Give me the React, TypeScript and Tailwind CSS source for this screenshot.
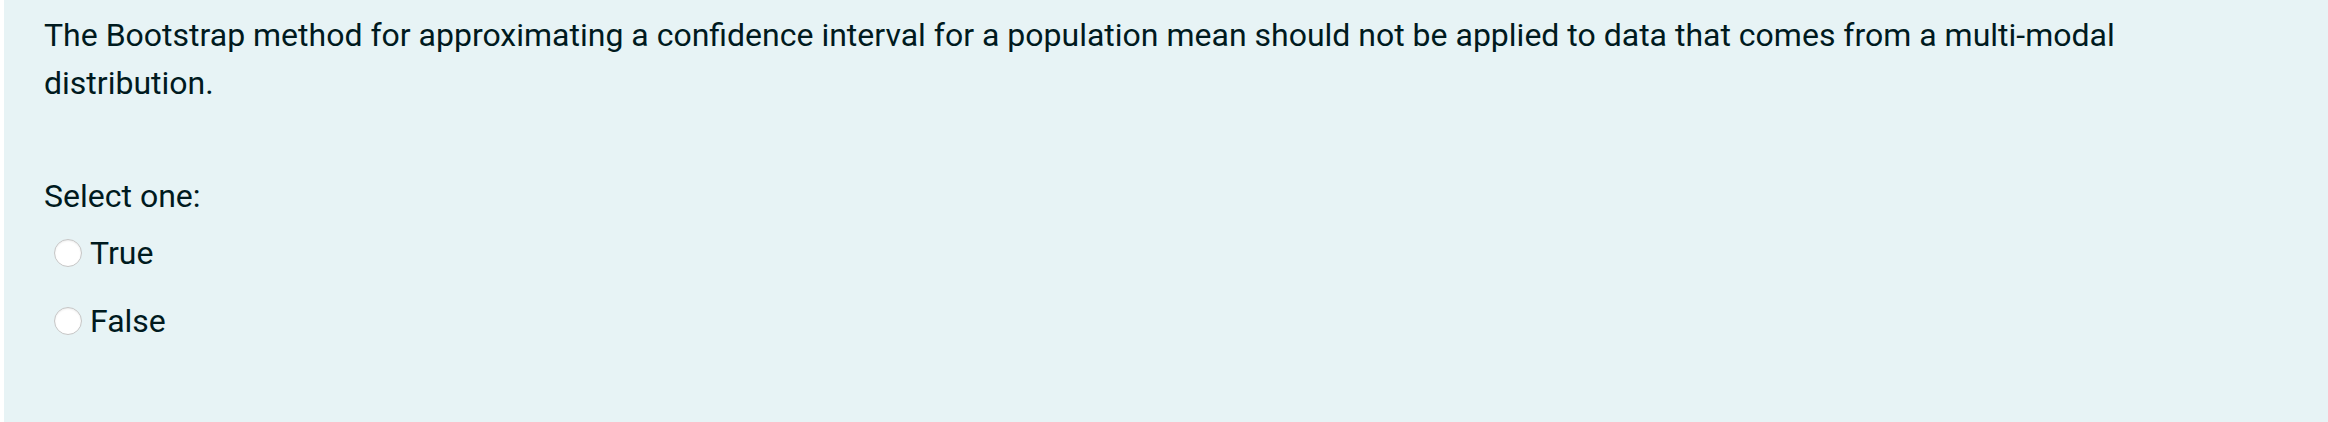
import React from "react";

function Radio({ label }: { label: string }) {
  return (
    <label className="flex h-[48px] items-center pl-[10px]">
      <span className="h-[28px] w-[28px] shrink-0 rounded-full border border-[#c6c6c6] bg-white shadow-[inset_0_1px_2px_rgba(0,0,0,0.08)]" />
      <span className="ml-[8px]">{label}</span>
    </label>
  );
}

export default function App() {
  return (
    <div className="flex h-[422px] w-[2328px] bg-white" style={{ fontFamily: "Roboto, 'Liberation Sans', sans-serif" }}>
      <div className="ml-[4px] h-[422px] flex-1 bg-[#e7f3f5] pl-[40px] pt-[11px] text-[32px] leading-[48px] text-[#001a1e]">
        <p className="w-[2160px]">
          The Bootstrap method for approximating a confidence interval for a population mean should not be applied to data that comes from a multi-modal distribution.
        </p>
        <div className="mt-[65px]">Select one:</div>
        <div className="mt-[9px] flex flex-col gap-[20px]">
          <Radio label="True" />
          <Radio label="False" />
        </div>
      </div>
    </div>
  );
}
